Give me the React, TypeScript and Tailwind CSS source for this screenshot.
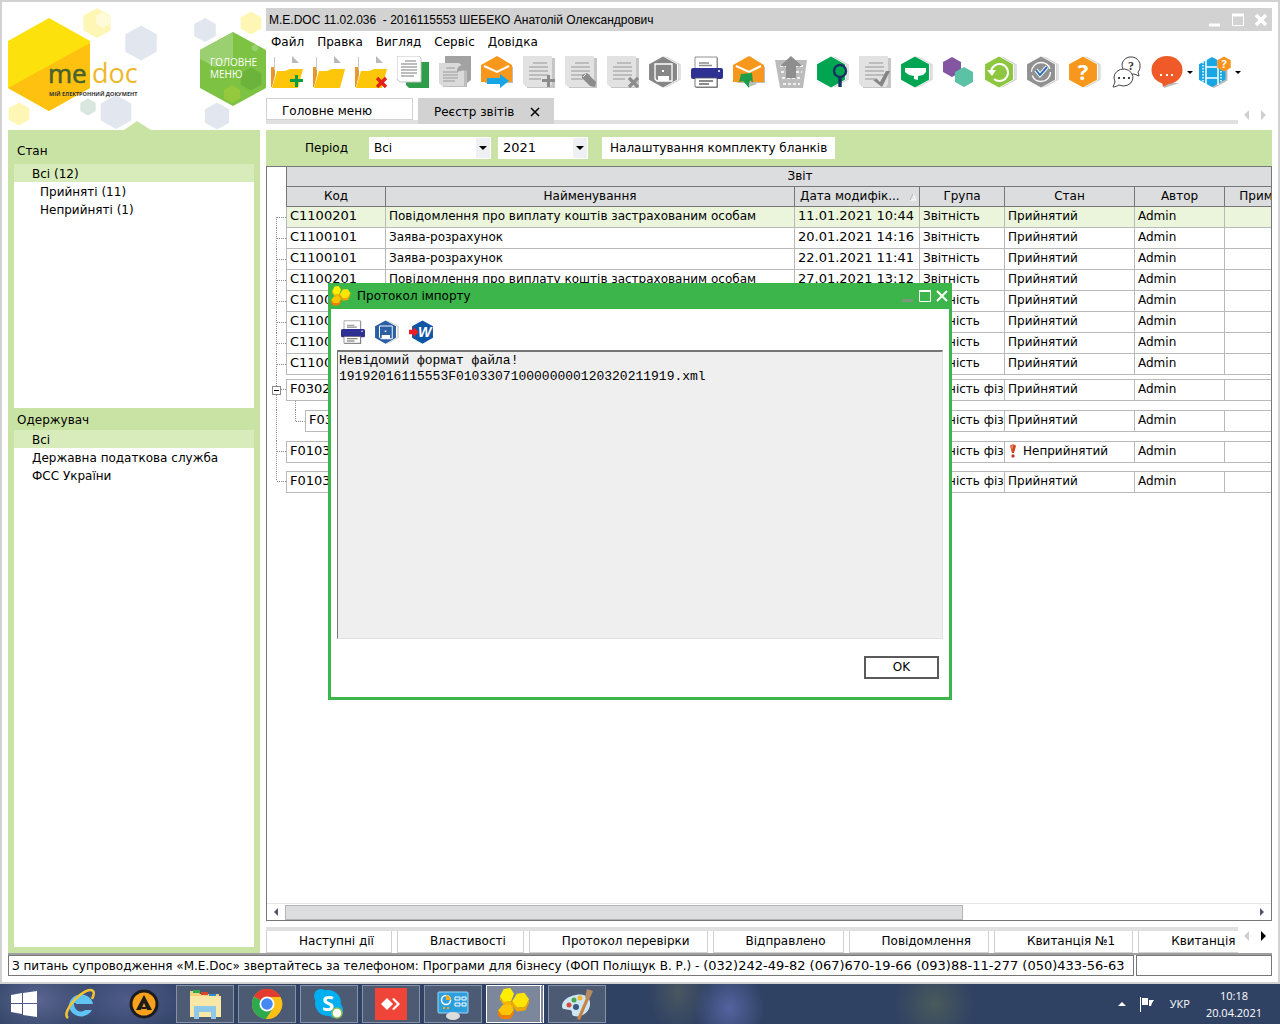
import React from 'react';
import { clsx } from 'clsx';

type HexProps = {
  cx: number;
  cy: number;
  r: number;
  fill: string;
  stroke?: string;
  opacity?: number;
};

// Pointy-top hexagon
function Hex({ cx, cy, r, ...rest }: HexProps) {
  const w = r * 0.9;
  const points = [
    [cx, cy - r],
    [cx + w, cy - r / 2],
    [cx + w, cy + r / 2],
    [cx, cy + r],
    [cx - w, cy + r / 2],
    [cx - w, cy - r / 2],
  ]
    .map((p) => p.join(','))
    .join(' ');
  return <polygon points={points} {...rest} />;
}

// Hexagon with two pages peeking out on the right
function StackedHex({ fill }: { fill: string }) {
  return (
    <>
      <Hex cx={18} cy={16} r={15} fill="#c4c4c4" />
      <Hex cx={17} cy={16} r={15} fill="#ffffff" />
      <Hex cx={16} cy={16} r={15.5} fill="#b5b5b5" />
      <Hex cx={15.5} cy={16} r={15.5} fill="#ffffff" />
      <Hex cx={14} cy={16} r={15.5} fill={fill} />
    </>
  );
}

function Icon({
  children,
  small,
}: {
  children: React.ReactNode;
  small?: boolean;
}) {
  return (
    <svg
      viewBox="0 0 32 32"
      className={small ? 'block size-6' : 'block size-8'}
      aria-hidden="true"
    >
      {children}
    </svg>
  );
}

function FolderShape() {
  return (
    <>
      <path d="M0 11h4v8L1 31H0z" fill="#e8962e" />
      <path d="M3 1h1v13H3z" fill="#c9c9c9" />
      <path d="M21 0l7 7h-7z" fill="#b9b9b9" />
      <path d="M6 15h8l5-2h13l-5 19H1z" fill="#fdc60a" />
    </>
  );
}

function GreyPage() {
  return (
    <>
      <path d="M2 2h30v30H4z" fill="#c6c6c6" />
      <path d="M0 0h29v28l-2 3H3l-3-3z" fill="#e2e2e2" />
      <path
        d="M10 7h14M6 11h19M6 15h19M6 19h19M6 23h12"
        stroke="#b0b0b0"
        strokeWidth="1.4"
      />
    </>
  );
}

function Envelope() {
  return (
    <>
      <path d="M2 11L18 1l14 10v16H4z" fill="#bdbdbd" />
      <path d="M0 9L16 0l15 9v17H0z" fill="#f7981d" />
      <path d="M3 10l13 6 12-6" fill="none" stroke="#ffffff" strokeWidth="2" />
    </>
  );
}

function PrinterShape() {
  return (
    <>
      <path d="M5 2h22v30H5z" fill="#9a9a9a" />
      <path d="M4 1h22v12H4z" fill="#ffffff" stroke="#777" strokeWidth="0.8" />
      <path d="M8 7h10M8 9.500h13" stroke="#8b8b8b" strokeWidth="1.4" />
      <rect y="12" width="32" height="11" rx="2" fill="#2e3192" />
      <circle cx="28" cy="15" r="1" fill="#ffffff" />
      <path d="M4 22h22v9H4z" fill="#ffffff" stroke="#555" strokeWidth="0.8" />
      <path d="M8 25h14M8 28h10" stroke="#666" strokeWidth="1.4" />
    </>
  );
}

function DiskShape() {
  return (
    <>
      <path
        d="M6 8h17v17H8l-2-2z"
        fill="none"
        stroke="#ffffff"
        strokeWidth="1.3"
      />
      <rect x="13" y="14" width="2" height="2" fill="#ffffff" />
      <path d="M9 20h11v5H9z" fill="#ffffff" />
    </>
  );
}

function HoneycombIcon({ className }: { className: string }) {
  return (
    <svg viewBox="0 0 34 34" className={className} aria-hidden="true">
      <path d="M5 11l8 3 6 2-4 6-6-3z" fill="#f0a800" />
      <path d="M6 1l7-1 4 6-3 8-8 1-4-6z" fill="#ffee00" />
      <path d="M2 9l4 6 8-1-1 3-7 1-4-6z" fill="#f3b400" />
      <path d="M20 6l8-1 5 7-4 8-9 1-5-7z" fill="#ffe500" />
      <path d="M15 14l5 7 9-1 4-8v4l-4 8-9 1-5-6z" fill="#eda800" />
      <path d="M5 18l8-1 4 6-4 6H4l-4-5z" fill="#fdc400" />
      <path d="M0 24l4 5h9l4-6v4l-4 6H4l-4-4z" fill="#f07d00" />
    </svg>
  );
}

const TOOLBAR = [
  {
    label: 'Створити звіт',
    icon: (
      <>
        <FolderShape />
        <path d="M24 19h3v4h5v3h-5v5h-3v-5h-5v-3h5z" fill="#0b9b47" />
      </>
    ),
  },
  { label: 'Відкрити звіт', icon: <FolderShape /> },
  {
    label: 'Видалити звіт',
    icon: (
      <>
        <FolderShape />
        <path
          d="M22 22l9 9M31 22l-9 9"
          stroke="#e32119"
          strokeWidth="3.4"
        />
      </>
    ),
  },
  {
    label: 'Копіювати',
    icon: (
      <>
        <path d="M12 6h20v26H12l-3-3V6z" fill="#2f9e4a" />
        <path d="M0 0h22l2 2v24H3l-3-3z" fill="#ffffff" stroke="#c4c4c4" />
        <path
          d="M8 5h11M4 8h16M4 11h16M4 14h16M4 17h16M4 20h13"
          stroke="#7d7d7d"
          strokeWidth="1.2"
        />
      </>
    ),
  },
  {
    label: 'Вставити',
    icon: (
      <>
        <path d="M6 0h26v24l-4 3V9H6z" fill="#a2a2a2" />
        <path d="M3 9h25v22H4z" fill="#bdbdbd" />
        <path d="M0 7h20l5 4v19H3l-3-3z" fill="#dadada" />
        <path
          d="M7 12h9M4 16h15M4 19h15M4 22h15M4 25h12"
          stroke="#999"
          strokeWidth="1.2"
        />
        <path d="M18 16c0-7 4-7 9-7V5l5 5v6c-5-2-8-2-14 0z" fill="#a2a2a2" />
      </>
    ),
  },
  {
    label: 'Відправити',
    icon: (
      <>
        <Envelope />
        <path d="M6 22h13v-4l9 7-9 7v-4H6z" fill="#16a5e6" />
      </>
    ),
  },
  {
    label: 'Додати рядок',
    icon: (
      <>
        <GreyPage />
        <path d="M24 19h3v4h5v3h-5v5h-3v-5h-5v-3h5z" fill="#8c8c8c" />
      </>
    ),
  },
  {
    label: 'Редагувати',
    icon: (
      <>
        <GreyPage />
        <path d="M17 19l5-2 9 9-1 5-5-1-8-8z" fill="#8c8c8c" />
        <path d="M18 21l3-3" stroke="#e2e2e2" />
      </>
    ),
  },
  {
    label: 'Видалити рядок',
    icon: (
      <>
        <GreyPage />
        <path
          d="M22 22l9 9M31 22l-9 9"
          stroke="#8c8c8c"
          strokeWidth="3.2"
        />
      </>
    ),
  },
  {
    label: 'Зберегти',
    icon: (
      <>
        <StackedHex fill="#868686" />
        <DiskShape />
      </>
    ),
  },
  { label: 'Друк', icon: <PrinterShape /> },
  {
    label: 'Отримати пошту',
    icon: (
      <>
        <Envelope />
        <path d="M8 18l11-1 1 10-3-3-1 8-6-7-4 1z" fill="#1d9e4b" />
        <path d="M16 31l1-6 3 2 2-1 2 2z" fill="#bdbdbd" />
      </>
    ),
  },
  {
    label: 'Імпорт',
    icon: (
      <>
        <path d="M0 4h32l-4 28H5z" fill="#bcbcbc" />
        <path
          d="M5 10h23M6 16h21M7 22h19M8 28h17"
          stroke="#ffffff"
          strokeWidth="1.6"
          strokeDasharray="3 2"
        />
        <path d="M16 0l11 10h-6v12H11V10H5z" fill="#8e8e8e" />
      </>
    ),
  },
  {
    label: 'Перегляд',
    icon: (
      <>
        <StackedHex fill="#00a551" />
        <circle
          cx="23"
          cy="15"
          r="6"
          fill="none"
          stroke="#15315f"
          strokeWidth="2.4"
        />
        <path d="M23 21v10" stroke="#15315f" strokeWidth="3.4" />
      </>
    ),
  },
  {
    label: 'Перевірка',
    icon: (
      <>
        <GreyPage />
        <path d="M14 24l4-1 3 3 6-11h4l-8 16z" fill="#858585" />
      </>
    ),
  },
  {
    label: 'Фільтр',
    icon: (
      <>
        <StackedHex fill="#00a551" />
        <path
          d="M4 12h21v4l-3 3-5 1v4l-4-1v-3l-5-1-4-3z"
          fill="#ffffff"
        />
      </>
    ),
  },
  {
    label: 'Модулі',
    icon: (
      <>
        <Hex cx={9} cy={11} r={10} fill="#8455a0" />
        <Hex cx={21} cy={21} r={10} fill="#5cc2a6" />
      </>
    ),
  },
  {
    label: 'Оновити',
    icon: (
      <>
        <StackedHex fill="#8dc63f" />
        <path
          d="M6 16a8.500 8.500 0 1 1 3 7"
          fill="none"
          stroke="#ffffff"
          strokeWidth="2"
        />
        <path d="M2 14h9l-4 6z" fill="#ffffff" />
      </>
    ),
  },
  {
    label: 'Перевірити статус',
    icon: (
      <>
        <StackedHex fill="#919191" />
        <circle
          cx="14"
          cy="16"
          r="9.500"
          fill="none"
          stroke="#ffffff"
          strokeWidth="1.3"
          strokeDasharray="26 4"
        />
        <path d="M9 14l4 5 7-8" fill="none" stroke="#fff" strokeWidth="4" />
        <path d="M9 14l4 5 7-8" fill="none" stroke="#2d6db5" strokeWidth="2" />
      </>
    ),
  },
  {
    label: 'Довідка',
    icon: (
      <>
        <StackedHex fill="#f7981d" />
        <text
          x="14"
          y="24"
          fontSize="22"
          fontWeight="700"
          textAnchor="middle"
          fill="#ffffff"
          fontFamily="Open Sans, sans-serif"
        >
          ?
        </text>
      </>
    ),
  },
  {
    label: 'Підтримка',
    icon: (
      <g fill="#ffffff" stroke="#444444">
        <path d="M11 8a9 8.500 0 0 1 18 3c0 2-1 4-2 5l1 4-5-2c-6 2-12-3-12-10z" />
        <path d="M3 22a9.500 8.500 0 1 1 5 7c-2 1-4 2-6 2 1-2 1-3 2-5z" />
        <path d="M7 22h2M12 22h2M17 22h2" strokeWidth="2" />
        <text
          x="20"
          y="14"
          fontSize="12"
          textAnchor="middle"
          fill="#333333"
          stroke="none"
          fontFamily="Liberation Serif, serif"
          fontWeight="700"
        >
          ?
        </text>
      </g>
    ),
  },
];

type Row = {
  code: string;
  name: string;
  date: string;
  group: string;
  state: string;
  nested?: boolean;
  open?: boolean;
  gap?: 4 | 8 | 9;
};

const NOTICE = 'Повідомлення про виплату коштів застрахованим особам';
const CLAIM = 'Заява-розрахунок';
const ACCEPTED = 'Прийнятий';
const REJECTED = 'Неприйнятий';

const ROWS: Row[] = [
  { code: 'C1100201', name: NOTICE, date: '11.01.2021 10:44', group: 'Звітність', state: ACCEPTED },
  { code: 'C1100101', name: CLAIM, date: '20.01.2021 14:16', group: 'Звітність', state: ACCEPTED },
  { code: 'C1100101', name: CLAIM, date: '22.01.2021 11:41', group: 'Звітність', state: ACCEPTED },
  { code: 'C1100201', name: NOTICE, date: '27.01.2021 13:12', group: 'Звітність', state: ACCEPTED },
  { code: 'C1100', name: '', date: '', group: 'Звітність', state: ACCEPTED },
  { code: 'C1100', name: '', date: '', group: 'Звітність', state: ACCEPTED },
  { code: 'C1100', name: '', date: '', group: 'Звітність', state: ACCEPTED },
  { code: 'C1100', name: '', date: '', group: 'Звітність', state: ACCEPTED },
  { code: 'F0302', name: '', date: '', group: 'Звітність фізи', state: ACCEPTED, gap: 4, open: true },
  { code: 'F03', name: '', date: '', group: 'Звітність фізи', state: ACCEPTED, gap: 9, nested: true },
  { code: 'F0103', name: '', date: '', group: 'Звітність фізи', state: REJECTED, gap: 9 },
  { code: 'F0103', name: '', date: '', group: 'Звітність фізи', state: ACCEPTED, gap: 8 },
];

const COLUMNS = ['Код', 'Найменування', 'Дата модифік...', 'Група', 'Стан', 'Автор', 'Примітка'];

const BOTTOM_TABS = [
  'Наступні дії',
  'Властивості',
  'Протокол перевірки',
  'Відправлено',
  'Повідомлення',
  'Квитанція №1',
  'Квитанція №2',
];

function Logo() {
  return (
    <svg
      viewBox="8 8 258 122"
      className="block h-[122px] w-[258px]"
      role="img"
      aria-label="M.E.Doc"
    >
      <polygon points="8,41 49,18 90,41 90,88 49,111 8,88" fill="#fde10c" />
      <polygon points="90,43 90,88 49,111 8,88" fill="#fec10f" />
      <Hex cx={97} cy={23} r={15} fill="#fdf6b4" />
      <Hex cx={103} cy={20} r={8} fill="#fffbd8" />
      <Hex cx={141} cy={43} r={17.5} fill="#e2e7ef" />
      <Hex cx={116} cy={112} r={17} fill="#e2e7ef" />
      <Hex cx={88} cy={107} r={8.5} fill="#d8e6df" />
      <Hex cx={19} cy={114} r={11.500} fill="#fdf6b4" />
      <Hex cx={205} cy={30} r={12} fill="#e2e7ef" />
      <Hex cx={251} cy={23} r={11.500} fill="#fdf6b4" />
      <Hex cx={217} cy={116} r={13.500} fill="#e2e7ef" />
      <polygon points="233,32 266,50 266,88 233,106 200,88 200,50" fill="#7dc242" />
      <polygon points="233,32 233,58 215,67 200,59 200,50" fill="#9bd070" />
      <Hex cx={251} cy={79} r={11.500} fill="#6bb33a" />
      <Hex cx={232} cy={94} r={9} fill="#95c93d" />
      <Hex cx={255} cy={48} r={3.500} fill="#9bd070" />
      <g fontFamily="Open Sans, sans-serif">
        <text x="48" y="83" fontSize="26" fill="#46622c" stroke="#46622c" strokeWidth="0.6">
          me
        </text>
        <text x="92" y="83" fontSize="27" fill="#eeb82c">
          doc
        </text>
        <text x="49" y="96" fontSize="5.500" fontWeight="700" fill="#333333">
          МІЙ ЕЛЕКТРОННИЙ ДОКУМЕНТ
        </text>
        <text x="210" y="66" fontSize="10" fill="#ffffff">
          ГОЛОВНЕ
        </text>
        <text x="210" y="78" fontSize="10" fill="#ffffff">
          МЕНЮ
        </text>
      </g>
      <polygon points="124,130 137,121 151,130" fill="#c9e3a4" />
    </svg>
  );
}

function FilterList({
  title,
  items,
  className,
}: {
  title: string;
  items: { label: string; indent?: boolean }[];
  className: string;
}) {
  return (
    <section className={clsx('flex flex-col', className)}>
      <h2 className="h-[22px] pl-[3px] leading-6">{title}</h2>
      <ul className="flex-1 bg-white">
        {items.map((item, i) => (
          <li
            key={item.label}
            className={clsx(
              'h-[18px] leading-5',
              item.indent ? 'pl-[26px]' : 'pl-[18px]',
              i === 0 && 'bg-[#d8ecbb]',
            )}
          >
            {item.label}
          </li>
        ))}
      </ul>
    </section>
  );
}

function Dropdown({
  label,
  value,
  className,
}: {
  label: string;
  value: string;
  className: string;
}) {
  return (
    <div className={clsx('relative h-[22px]', className)}>
      <select
        aria-label={label}
        defaultValue={value}
        className="h-full w-full appearance-none bg-white pl-[5px] leading-[22px]"
      >
        <option>{value}</option>
      </select>
      <span className="pointer-events-none absolute inset-y-px right-px flex w-[14px] items-center justify-center bg-[#eef0f4]">
        <svg viewBox="0 0 8 4" className="h-1 w-2">
          <path d="M0 0h8L4 4z" />
        </svg>
      </span>
    </div>
  );
}

function Pager({ nextActive }: { nextActive?: boolean }) {
  return (
    <div className="flex w-[34px] shrink-0 items-center justify-between px-[6px]">
      <button aria-label="Назад">
        <svg viewBox="0 0 5 10" className="h-[10px] w-[5px]">
          <path d="M5 0v10L0 5z" fill="#cfcfcf" />
        </svg>
      </button>
      <button aria-label="Далі">
        <svg viewBox="0 0 5 10" className="h-[10px] w-[5px]">
          <path d="M0 0v10l5-5z" fill={nextActive ? '#000' : '#cfcfcf'} />
        </svg>
      </button>
    </div>
  );
}

function TreeCell({ row, last }: { row: Row; last: boolean }) {
  const height = row.gap ? 22 : 21;
  return (
    <td className="p-0">
      <svg
        viewBox={`0 0 19 ${height}`}
        className={clsx('block w-[19px]', row.gap ? 'h-[22px]' : 'h-[21px]')}
        stroke="#8a8a8a"
        strokeDasharray="1 1"
        shapeRendering="crispEdges"
      >
        <path d={`M9.500 ${row === ROWS[0] ? 10 : 0}V${last ? 10 : height}`} />
        {!row.nested && <path d="M10 10.500h9" />}
        {row.open && (
          <g strokeDasharray="none">
            <rect x="5.500" y="7.500" width="8" height="8" fill="#fff" />
            <path d="M7 11.500h5" stroke="#000" />
          </g>
        )}
      </svg>
    </td>
  );
}

function ReportRow({ row, index }: { row: Row; index: number }) {
  const cell = clsx(
    'overflow-hidden border-r border-b border-[#b9b9b9] p-0 pl-[3px] align-top whitespace-nowrap leading-[18px]',
    row.gap && 'border-t',
    index === 0 && 'bg-[#eaf5dc]',
  );
  return (
    <>
      {row.gap && (
        <tr aria-hidden="true">
          <td className="p-0">
            <svg
              className={clsx(
                'block w-[19px]',
                row.gap === 4 && 'h-1',
                row.gap === 8 && 'h-2',
                row.gap === 9 && 'h-[9px]',
              )}
            >
              <path d="M9.500 0v9" stroke="#8a8a8a" strokeDasharray="1 1" />
            </svg>
          </td>
          <td className="p-0">
            {row.nested && (
              <svg className="block h-[9px] w-[19px]">
                <path d="M9.500 0v9" stroke="#8a8a8a" strokeDasharray="1 1" />
              </svg>
            )}
          </td>
        </tr>
      )}
      <tr>
        <TreeCell row={row} last={index === ROWS.length - 1} />
        {row.nested ? (
          <td className="p-0">
            <div className="flex">
              <svg
                className="h-[22px] w-[19px] shrink-0"
                fill="none"
                stroke="#8a8a8a"
                strokeDasharray="1 1"
              >
                <path d="M9.500 0v11.500h9" />
              </svg>
              <div className="h-[22px] flex-1 border border-[#b9b9b9] pl-[3px] text-[13px] leading-[18px]">
                {row.code}
              </div>
            </div>
          </td>
        ) : (
          <td className={clsx(cell, 'border-l text-[13px]')}>{row.code}</td>
        )}
        <td className={cell}>{row.name}</td>
        <td className={clsx(cell, 'text-[13px]')}>{row.date}</td>
        <td className={cell}>{row.group}</td>
        <td className={cell}>
          {row.state === REJECTED ? (
            <span className="flex items-center gap-[5px]">
              <svg viewBox="0 0 10 14" className="h-[14px] w-[10px]">
                <path d="M2 2c1-2 5-2 6 0L6 9H4z" fill="#d9441f" />
                <path d="M3 2c1-1 2-1 2 0L4 6z" fill="#f39a78" />
                <circle cx="5" cy="12" r="1.700" fill="#c0392b" />
              </svg>
              {row.state}
            </span>
          ) : (
            row.state
          )}
        </td>
        <td className={cell}>Admin</td>
        <td className={cell} />
      </tr>
    </>
  );
}

function ReportTable() {
  return (
    <div className="flex min-h-0 flex-1 flex-col border border-[#777777]">
      <div className="min-h-0 flex-1 overflow-hidden">
        <table className="w-[1046px] table-fixed border-separate border-spacing-0">
          <colgroup>
            <col className="w-[19px]" />
            <col className="w-[100px]" />
            <col className="w-[409px]" />
            <col className="w-[125px]" />
            <col className="w-[85px]" />
            <col className="w-[130px]" />
            <col className="w-[90px]" />
            <col className="w-[88px]" />
          </colgroup>
          <thead>
            <tr className="h-5">
              <td rowSpan={2} />
              <th
                colSpan={7}
                className="border-b border-l border-[#777777] bg-[#dcdddf] p-0 leading-[19px] font-normal"
              >
                Звіт
              </th>
            </tr>
            <tr className="h-5">
              {COLUMNS.map((title, i) => (
                <th
                  key={title}
                  className={clsx(
                    'border-r border-b border-[#777777] bg-[#dcdddf] p-0 leading-[19px] font-normal whitespace-nowrap',
                    i === 0 && 'border-l',
                  )}
                >
                  {i === 2 ? (
                    <span className="flex items-center justify-between pr-[2px] pl-[5px]">
                      {title}
                      <svg viewBox="0 0 8 8" className="size-2 shrink-0">
                        <path d="M4 1l3 6H1z" fill="#e8e8e8" stroke="#fff" />
                        <path d="M4 1L1 7" stroke="#aaa" />
                      </svg>
                    </span>
                  ) : (
                    title
                  )}
                </th>
              ))}
            </tr>
          </thead>
          <tbody>
            {ROWS.map((row, i) => (
              <ReportRow key={i} row={row} index={i} />
            ))}
          </tbody>
        </table>
      </div>
      {/* Horizontal scroll bar */}
      <div className="flex h-[17px] items-center border-t border-[#e6e6e6]">
        <span className="flex w-[18px] justify-center">
          <svg viewBox="0 0 4 8" className="h-2 w-1">
            <path d="M4 0v8L0 4z" fill="#4f5569" />
          </svg>
        </span>
        <span className="flex-1">
          <span className="block h-[15px] w-[70%] border border-[#b4b4b4] bg-[#dcdddf]" />
        </span>
        <span className="flex w-[18px] justify-center">
          <svg viewBox="0 0 4 8" className="h-2 w-1">
            <path d="M0 0v8l4-4z" fill="#4f5569" />
          </svg>
        </span>
      </div>
    </div>
  );
}

function ImportDialog() {
  return (
    <div
      role="dialog"
      aria-labelledby="import-title"
      className="flex h-[417px] w-[624px] flex-col border-[3px] border-t-0 border-[#3cb54a] bg-white"
    >
      <div className="flex h-[26px] shrink-0 items-center bg-[#3cb54a]">
        <HoneycombIcon className="size-5" />
        <h2 id="import-title" className="flex-1 pl-[6px]">
          Протокол імпорту
        </h2>
        <svg viewBox="0 0 48 14" className="h-[14px] w-12" fill="none" stroke="#fff">
          <path d="M1 11.500h11" stroke="#7d987f" strokeWidth="3" />
          <path d="M18.500 1.500h11v11h-11z" />
          <path d="M18 2h12" strokeWidth="2" />
          <path d="M36 2l10 10M46 2L36 12" strokeWidth="2" />
        </svg>
      </div>
      <div className="flex h-[41px] shrink-0 items-center gap-[10px] pt-[6px] pl-[10px]">
        <button aria-label="Друк">
          <Icon small>
            <PrinterShape />
          </Icon>
        </button>
        <button aria-label="Зберегти">
          <Icon small>
            <StackedHex fill="#2b5fa5" />
            <DiskShape />
          </Icon>
        </button>
        <button aria-label="Відкрити у Word">
          <Icon small>
            <Hex cx={18} cy={16} r={15.500} fill="#0f55a5" />
            <path d="M0 13h6v-4l7 7-7 7v-4H0z" fill="#ee1c25" />
            <text
              x="21"
              y="23"
              fontSize="19"
              fontWeight="700"
              fontStyle="italic"
              textAnchor="middle"
              fill="#ffffff"
              fontFamily="Liberation Sans, sans-serif"
            >
              W
            </text>
          </Icon>
        </button>
      </div>
      <textarea
        readOnly
        aria-label="Текст протоколу"
        className="mx-[6px] h-[289px] shrink-0 resize-none border-t-2 border-r border-b border-l border-[#767676] border-r-[#e0e0e0] border-b-[#e0e0e0] bg-[#efefef] pt-px pl-px font-['Liberation_Mono',monospace] text-[13px] leading-4"
        defaultValue={
          'Невідомий формат файла!\n19192016115553F0103307100000000120320211919.xml'
        }
      />
      <div className="flex justify-end pt-[17px] pr-[10px]">
        <button className="h-[23px] w-[75px] border-2 border-[#5a5a5a] bg-white">
          OK
        </button>
      </div>
    </div>
  );
}

const TASK_BUTTONS = [
  {
    label: 'Провідник',
    icon: (
      <>
        <path d="M1 3h8l2 3h19v23H1z" fill="#efd27a" />
        <path d="M4 2h7v3H4z" fill="#2fa84f" />
        <path d="M12 4h7v3h-7z" fill="#d9472b" />
        <path d="M20 6h7v3h-7z" fill="#2b8fd8" />
        <path d="M1 8h31v21H1z" fill="#f8e7a6" />
        <path d="M5 31V18h22v13h-5v-7H10v7z" fill="#8fc9ea" />
      </>
    ),
  },
  {
    label: 'Chrome',
    icon: (
      <>
        <circle cx="16" cy="16" r="15" fill="#fbc116" />
        <path d="M16 16L3 8.500A15 15 0 0 1 29.500 9z" fill="#e33b2e" />
        <path d="M16 16L3 8.500A15 15 0 0 0 15 31l8-11z" fill="#2da94f" />
        <path d="M16 9h13.500A15 15 0 0 1 15 31l7-11z" fill="#fbc116" />
        <circle cx="16" cy="16" r="7.500" fill="#ffffff" />
        <circle cx="16" cy="16" r="5.800" fill="#4688f1" />
      </>
    ),
  },
  {
    label: 'Skype',
    icon: (
      <>
        <circle cx="15" cy="15" r="13" fill="#00aff0" />
        <circle cx="8" cy="8" r="7" fill="#00aff0" />
        <circle cx="22" cy="22" r="8" fill="#00aff0" />
        <text
          x="15"
          y="23"
          fontSize="22"
          fontWeight="700"
          textAnchor="middle"
          fill="#ffffff"
          fontFamily="Open Sans, sans-serif"
        >
          S
        </text>
        <circle cx="24" cy="25" r="5" fill="#fff" stroke="#8cc152" strokeWidth="1.500" />
      </>
    ),
  },
  {
    label: 'AnyDesk',
    icon: (
      <>
        <path d="M0 0h32v32H0z" fill="#ef4438" />
        <path d="M12 10l6 6-6 6-6-6z" fill="#fff" />
        <path d="M17 11l2-1 6 6-6 6-2-1 5-5z" fill="#fff" />
      </>
    ),
  },
  {
    label: 'Панель керування',
    icon: (
      <>
        <rect x="1" y="4" width="30" height="21" rx="1" fill="#2c9fdc" stroke="#9fd6f5" />
        <circle cx="9" cy="12" r="4.500" fill="none" stroke="#fff" strokeWidth="1.500" />
        <path d="M9 12V7a5 5 0 0 1 5 5z" fill="#f7a823" />
        <path d="M18 9h5v3h-5zM25 9h4v3h-4zM18 15h5v3h-5zM25 15h4v3h-4z" fill="none" stroke="#fff" />
        <path d="M6 20h2M10 20h2" stroke="#f7a823" strokeWidth="2" />
        <ellipse cx="16" cy="28" rx="7" ry="4" fill="#dcdcdc" />
      </>
    ),
  },
  {
    label: 'M.E.Doc',
    active: true,
    icon: null,
  },
  {
    label: 'Paint',
    icon: (
      <>
        <path
          d="M15 7c9-2 15 3 14 10-1 8-9 13-16 11-4-1 0-5-4-6-5-1-8 0-8-4 0-5 6-10 14-11z"
          fill="#cde6f3"
        />
        <circle cx="8" cy="17" r="2.500" fill="#d94a3a" />
        <circle cx="13" cy="12" r="2.500" fill="#4aa84a" />
        <circle cx="19" cy="10" r="2.500" fill="#f2b632" />
        <circle cx="15" cy="19" r="3" fill="#3a5a80" />
        <path d="M16 31l9-21 3 1-9 21z" fill="#c98345" />
        <path d="M24 10l2-9 6 2-4 9z" fill="#b98b62" />
      </>
    ),
  },
];

function Taskbar() {
  return (
    <footer className="flex h-10 shrink-0 items-center bg-[#2f4263] bg-[radial-gradient(ellipse_60px_40px_at_3%_40%,#5b6591,transparent),radial-gradient(ellipse_70px_40px_at_10%_40%,#4f5b8c,transparent),radial-gradient(ellipse_35px_40px_at_57%_60%,#5563a0,transparent),radial-gradient(ellipse_30px_40px_at_53%_20%,#4a5660,transparent),radial-gradient(ellipse_40px_40px_at_73%_50%,#4a5a5c,transparent)] font-['Open_Sans',sans-serif] text-[11px] text-white">
      <button aria-label="Пуск" className="w-12 pl-[11px]">
        <svg viewBox="0 0 26 26" className="size-[26px]" fill="#fff">
          <path d="M0 4l11-2v10H0zM12 2l14-2v12H12zM0 13h11v10L0 21zM12 13h14v13l-14-2z" />
        </svg>
      </button>
      <button aria-label="Internet Explorer" className="flex w-16 justify-center">
        <svg viewBox="0 0 32 32" className="size-8">
          <path
            d="M28 22a12 11 0 1 1 1-6H12c0-5 9-6 9-1H10c0 9 8 10 11 7z"
            fill="#5fc3f3"
          />
          <path
            d="M4 30C-4 24 21-3 29 3c2 2 0 6-1 8"
            fill="none"
            stroke="#f4c430"
            strokeWidth="2.500"
          />
        </svg>
      </button>
      <button aria-label="AIMP" className="flex w-16 justify-center">
        <svg viewBox="0 0 32 32" className="size-8">
          <circle cx="16" cy="16" r="14.500" fill="#1c1c1c" />
          <circle cx="16" cy="16" r="11.500" fill="#f9a11b" />
          <path d="M16 7l8 15h-5l-3-7-3 7H8z" fill="#1c1c1c" />
          <path d="M14 20h4" stroke="#1c1c1c" strokeWidth="2" />
        </svg>
      </button>
      <div className="flex gap-1">
        {TASK_BUTTONS.map((task) => (
          <button
            key={task.label}
            aria-label={task.label}
            className={clsx(
              'flex h-[38px] w-[58px] items-center justify-center border',
              task.active
                ? 'border-r-4 border-double border-white bg-[#7c879c]'
                : 'border-[#8790a5] bg-[#4d5a74]',
            )}
          >
            {task.icon ? (
              <Icon>{task.icon}</Icon>
            ) : (
              <HoneycombIcon className="size-8" />
            )}
          </button>
        ))}
      </div>
      <div className="ml-auto flex items-center pr-[18px]">
        <svg viewBox="0 0 8 4" className="mr-[13px] h-1 w-2" fill="#fff">
          <path d="M4 0l4 4H0z" />
        </svg>
        <svg viewBox="0 0 16 16" className="mr-[15px] size-4" fill="#fff">
          <path d="M1 1h1v15H1zM3 2h6v7H3zM10 4h5l-2 3-1 3h-2z" />
        </svg>
        <span className="mr-4">УКР</span>
        <div className="text-center leading-[17px]">
          <div>10:18</div>
          <div>20.04.2021</div>
        </div>
      </div>
    </footer>
  );
}

export default function App() {
  return (
    <div className="flex h-screen flex-col overflow-hidden font-['DejaVu_Sans',Verdana,sans-serif] text-xs text-black">
      <div className="relative flex min-h-0 flex-1 flex-col border-2 border-[#d2d2d2] bg-white p-[6px]">
        <div className="flex min-h-0 flex-1 gap-[6px]">
          <aside className="flex w-[252px] shrink-0 flex-col">
            <Logo />
            <div className="flex min-h-0 flex-1 flex-col bg-[#c9e3a4] p-[6px]">
              <FilterList
                title="Стан"
                className="h-[272px] shrink-0 gap-[3px] pt-[3px]"
                items={[
                  { label: 'Всі (12)' },
                  { label: 'Прийняті (11)', indent: true },
                  { label: 'Неприйняті (1)', indent: true },
                ]}
              />
              <FilterList
                title="Одержувач"
                className="min-h-0 flex-1"
                items={[
                  { label: 'Всі' },
                  { label: 'Державна податкова служба' },
                  { label: 'ФСС України' },
                ]}
              />
            </div>
          </aside>

          <main className="flex min-w-0 flex-1 flex-col">
            <header className="flex h-[23px] shrink-0 items-center justify-between bg-[#d2d2d2] pr-1 pl-[3px]">
              <h1 className="font-['Liberation_Sans',Arial,sans-serif] text-xs whitespace-pre">
                M.E.DOC 11.02.036  - 2016115553 ШЕБЕКО Анатолій Олександрович
              </h1>
              <svg viewBox="0 0 59 14" className="h-[14px] w-[59px]" fill="none" stroke="#fff">
                <path d="M0 12h11" strokeWidth="3" />
                <path d="M23.500 1.500h11v11h-11z" />
                <path d="M23 2h12" strokeWidth="3" />
                <path d="M47 2l10 10M57 2L47 12" strokeWidth="3.500" />
              </svg>
            </header>

            <nav className="flex h-[21px] shrink-0 items-center gap-[13px] pl-[5px]">
              {['Файл', 'Правка', 'Вигляд', 'Сервіс', 'Довідка'].map((item) => (
                <button key={item}>{item}</button>
              ))}
            </nav>

            <div className="flex h-[46px] shrink-0 items-center gap-[10px] pb-[6px] pl-[5px]">
              {TOOLBAR.map((tool) => (
                <button key={tool.label} aria-label={tool.label} className="shrink-0">
                  <Icon>{tool.icon}</Icon>
                </button>
              ))}
              <button aria-label="Чат" className="-ml-0.5 flex shrink-0 items-center gap-1">
                <Icon>
                  <path d="M14 27h14l-15 5z" fill="#bbb" />
                  <ellipse cx="16" cy="14" rx="15.500" ry="14" fill="#f05a28" />
                  <path d="M11 26l1 5 9-5z" fill="#f05a28" />
                  <path d="M9 19h2M15 19h2M20 19h2" stroke="#fff" strokeWidth="2" />
                </Icon>
                <svg viewBox="0 0 6 3" className="h-[3px] w-[6px]">
                  <path d="M0 0h6L3 3z" />
                </svg>
              </button>
              <button aria-label="Відео" className="-ml-1 flex shrink-0 items-center gap-1">
                <Icon>
                  <Hex cx={15} cy={17} r={15} fill="#bbb" />
                  <Hex cx={13} cy={16} r={15} fill="#18a6e4" />
                  <path d="M4 6v20M22 6v20" stroke="#fff" strokeWidth="1.500" strokeDasharray="1.500 1.500" />
                  <path d="M7 3v26M19 3v26M7 11h12M7 22h12" stroke="#fff" strokeWidth="1.500" />
                  <Hex cx={25} cy={8} r={7.500} fill="#f7941d" />
                  <text
                    x="25"
                    y="12"
                    fontSize="11"
                    fontWeight="700"
                    textAnchor="middle"
                    fill="#ffffff"
                    fontFamily="Open Sans, sans-serif"
                  >
                    ?
                  </text>
                </Icon>
                <svg viewBox="0 0 6 3" className="h-[3px] w-[6px]">
                  <path d="M0 0h6L3 3z" />
                </svg>
              </button>
            </div>

            <div className="flex h-[26px] shrink-0">
              <div className="flex flex-1 gap-[5px] border-b-4 border-[#e0e0e0]">
                <button className="h-[22px] w-[147px] border border-[#d2d2d2] pt-1 pl-[15px] text-left">
                  Головне меню
                </button>
                <div className="flex h-[26px] w-[136px] items-center justify-between bg-[#d2d2d2] pt-0.5 pr-[14px] pl-4">
                  <button>Реєстр звітів</button>
                  <button aria-label="Закрити">
                    <svg viewBox="0 0 10 10" className="size-[10px]">
                      <path d="M1 1l8 8M9 1L1 9" stroke="#000" strokeWidth="1.500" />
                    </svg>
                  </button>
                </div>
              </div>
              <div className="flex pt-2">
                <Pager />
              </div>
            </div>

            <div className="mt-[6px] flex h-9 shrink-0 items-center bg-[#c9e3a4] pl-[39px]">
              <span className="w-16">Період</span>
              <Dropdown label="Період" value="Всі" className="w-[122px]" />
              <Dropdown
                label="Рік"
                value="2021"
                className="ml-[7px] w-[90px] text-[13px]"
              />
              <button className="ml-[14px] h-[22px] bg-white px-2">
                Налаштування комплекту бланків
              </button>
            </div>

            <ReportTable />

            <div className="mt-[6px] flex h-[26px] shrink-0">
              <div className="flex min-w-0 flex-1 overflow-hidden">
                {BOTTOM_TABS.map((tab) => (
                  <div key={tab} className="flex shrink-0 border-t-4 border-[#e0e0e0] pr-[5px]">
                    <button className="border-x border-b border-[#d2d2d2] pr-[17px] pb-0.5 pl-8 whitespace-nowrap">
                      {tab}
                    </button>
                  </div>
                ))}
              </div>
              <div className="flex pb-[8px]">
                <Pager nextActive />
              </div>
            </div>
          </main>
        </div>

        <div className="flex h-[23px] shrink-0 gap-[2px] border-t-2 border-[#a0a0a0]">
          <div className="flex-1 border border-[#777777] px-[3px] leading-[19px] whitespace-nowrap">
            З питань супроводження «M.E.Doc» звертайтесь за телефоном: Програми для бізнесу (ФОП Поліщук В. Р.) -{' '}
            <span className="text-[13px]">
              (032)242-49-82 (067)670-19-66 (093)88-11-277 (050)433-56-63
            </span>
          </div>
          <div className="w-[136px] border border-[#777777]" />
        </div>

        <div className="absolute inset-0 flex items-center justify-center pb-0.5">
          <ImportDialog />
        </div>
      </div>
      <Taskbar />
    </div>
  );
}
